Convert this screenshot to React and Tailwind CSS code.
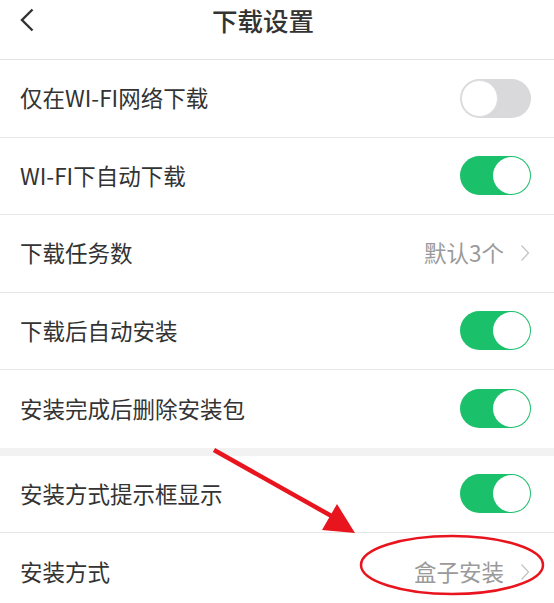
import { useState } from 'react';

const rowsTop = [
  { label: '仅在WI-FI网络下载', type: 'toggle', on: false },
  { label: 'WI-FI下自动下载', type: 'toggle', on: true },
  { label: '下载任务数', type: 'link', value: '默认3个' },
  { label: '下载后自动安装', type: 'toggle', on: true },
  { label: '安装完成后删除安装包', type: 'toggle', on: true },
];

const rowsBottom = [
  { label: '安装方式提示框显示', type: 'toggle', on: true },
  { label: '安装方式', type: 'link', value: '盒子安装' },
];

const Toggle = ({ on }) => (
  <div
    className={`relative w-[71px] h-[39px] rounded-full ${on ? 'bg-[#1bc06a]' : 'bg-[#d9d9dc]'}`}
  >
    <div
      className={`absolute top-[1px] w-[37px] h-[37px] rounded-full bg-white ${
        on ? 'right-[1px]' : 'left-[1px] border border-[#dedede]'
      }`}
    />
  </div>
);

const Chevron = ({ className }) => (
  <svg viewBox="0 0 10 18" className={className} fill="none" stroke="currentColor" strokeWidth="1.3">
    <path d="M1.5 1.5 L8.5 9 L1.5 16.5" />
  </svg>
);

const Row = ({ row, last }) => {
  const [on, setOn] = useState(row.on);
  return (
    <div className={`h-[77.5px] flex items-center justify-between pl-[20px] pr-[23px] ${last ? '' : 'border-b border-[#e6e6e6]'}`}>
      <span className="text-[22.5px] text-[#333]">{row.label}</span>
      {row.type === 'toggle' ? (
        <button onClick={() => setOn(!on)}>
          <Toggle on={on} />
        </button>
      ) : (
        <div className="flex items-center gap-[16px] text-[#9a9a9a]">
          <span className="text-[22.5px]">{row.value}</span>
          <Chevron className="w-[10px] h-[18px] text-[#c4c4c4] mr-[1px]" />
        </div>
      )}
    </div>
  );
};

const App = () => {
  return (
    <div
      className="relative w-[554px] h-[603px] overflow-hidden bg-white"
      style={{ fontFamily: '"Noto Sans CJK SC", "Noto Sans", sans-serif' }}
    >
      {/* Header */}
      <div className="relative h-[60px] flex items-center justify-center pr-[28px] border-b border-[#e3e3e3]">
        <svg viewBox="0 0 14 24" className="absolute left-[20px] top-[8px] w-[14px] h-[24px] text-[#333]" fill="none" stroke="currentColor" strokeWidth="2.4">
          <path d="M12.5 1.5 L2 12 L12.5 22.5" />
        </svg>
        <h1 className="text-[25.5px] font-medium text-[#333] -mt-[19px]">下载设置</h1>
      </div>

      {rowsTop.map((row, i) => (
        <Row key={row.label} row={row} last={i === rowsTop.length - 1} />
      ))}

      <div className="h-[8px] bg-[#f2f2f2]" />

      {rowsBottom.map((row, i) => (
        <Row key={row.label} row={row} last={i === rowsBottom.length - 1} />
      ))}

      {/* Annotation overlay */}
      <svg className="absolute inset-0 pointer-events-none" width="554" height="603">
        <line x1="214" y1="450" x2="335" y2="518" stroke="#e8141e" strokeWidth="4.5" />
        <polygon points="355,533 322,530 337,504" fill="#e8141e" />
        <ellipse cx="452" cy="565" rx="91" ry="29" fill="none" stroke="#e8141e" strokeWidth="2.5" />
      </svg>
    </div>
  );
};

export default App;
